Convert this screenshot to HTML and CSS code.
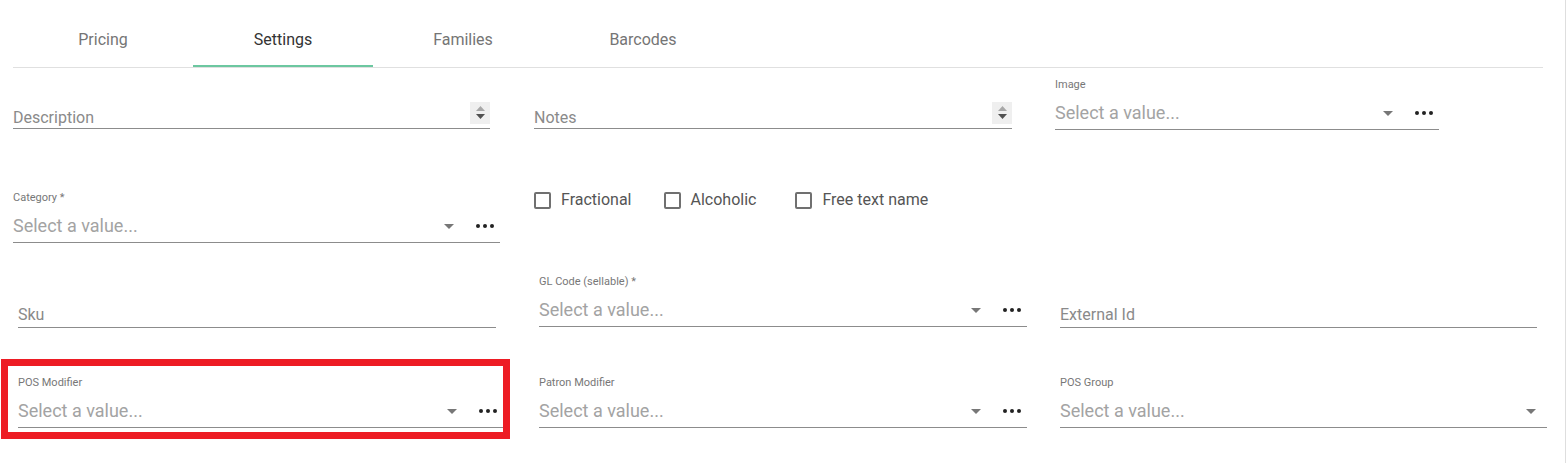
FILE: index.html
```html
<!DOCTYPE html>
<html>
<head>
<meta charset="utf-8">
<link rel="stylesheet" href="styles.css">
</head>
<body>
<div class="page">
  <div class="tabs">
    <div class="tab">Pricing</div>
    <div class="tab active">Settings</div>
    <div class="tab">Families</div>
    <div class="tab">Barcodes</div>
  </div>

  <div class="row row1">
    <div class="field tf w-desc ml-13 mb-1">
      <div class="tcontrol tall">
        <span class="ttext">Description</span>
        <span class="spinner"><svg width="20" height="22" viewBox="0 0 20 22"><polygon points="6,9 15,9 10.5,4" fill="#a8a8a8"/><polygon points="6,12 15,12 10.5,17" fill="#505050"/></svg></span>
      </div>
    </div>
    <div class="field tf w-notes ml-44 mb-1">
      <div class="tcontrol tall">
        <span class="ttext">Notes</span>
        <span class="spinner"><svg width="20" height="22" viewBox="0 0 20 22"><polygon points="6,9 15,9 10.5,4" fill="#a8a8a8"/><polygon points="6,12 15,12 10.5,17" fill="#505050"/></svg></span>
      </div>
    </div>
    <div class="field w-image ml-43">
      <div class="label">Image</div>
      <div class="scontrol">
        <span class="ph">Select a value...</span>
        <svg class="arrow" width="10" height="5" viewBox="0 0 10 5"><polygon points="0,0 10,0 5,5" fill="#777"/></svg>
        <svg class="dots" width="18" height="4" viewBox="0 0 18 4"><circle cx="2" cy="2" r="2" fill="#222"/><circle cx="9" cy="2" r="2" fill="#222"/><circle cx="16" cy="2" r="2" fill="#222"/></svg>
      </div>
    </div>
  </div>

  <div class="row row2">
    <div class="field w-cat ml-13">
      <div class="label">Category *</div>
      <div class="scontrol">
        <span class="ph">Select a value...</span>
        <svg class="arrow" width="10" height="5" viewBox="0 0 10 5"><polygon points="0,0 10,0 5,5" fill="#777"/></svg>
        <svg class="dots" width="18" height="4" viewBox="0 0 18 4"><circle cx="2" cy="2" r="2" fill="#222"/><circle cx="9" cy="2" r="2" fill="#222"/><circle cx="16" cy="2" r="2" fill="#222"/></svg>
      </div>
    </div>
    <div class="checks">
      <label class="check"><span class="box"></span><span class="ctext">Fractional</span></label>
      <label class="check"><span class="box"></span><span class="ctext">Alcoholic</span></label>
      <label class="check"><span class="box"></span><span class="ctext">Free text name</span></label>
    </div>
  </div>

  <div class="row row3">
    <div class="field tf w-sku ml-18">
      <div class="tcontrol"><span class="ttext">Sku</span></div>
    </div>
    <div class="field w-gl ml-43 mb-1">
      <div class="label">GL Code (sellable) *</div>
      <div class="scontrol">
        <span class="ph">Select a value...</span>
        <svg class="arrow" width="10" height="5" viewBox="0 0 10 5"><polygon points="0,0 10,0 5,5" fill="#777"/></svg>
        <svg class="dots" width="18" height="4" viewBox="0 0 18 4"><circle cx="2" cy="2" r="2" fill="#222"/><circle cx="9" cy="2" r="2" fill="#222"/><circle cx="16" cy="2" r="2" fill="#222"/></svg>
      </div>
    </div>
    <div class="field tf w-ext ml-33">
      <div class="tcontrol"><span class="ttext">External Id</span></div>
    </div>
  </div>

  <div class="row row4">
    <div class="field w-posmod ml-18">
      <div class="label">POS Modifier</div>
      <div class="scontrol">
        <span class="ph">Select a value...</span>
        <svg class="arrow" width="10" height="5" viewBox="0 0 10 5"><polygon points="0,0 10,0 5,5" fill="#777"/></svg>
        <svg class="dots" width="18" height="4" viewBox="0 0 18 4"><circle cx="2" cy="2" r="2" fill="#222"/><circle cx="9" cy="2" r="2" fill="#222"/><circle cx="16" cy="2" r="2" fill="#222"/></svg>
      </div>
    </div>
    <div class="field w-gl ml-36">
      <div class="label">Patron Modifier</div>
      <div class="scontrol">
        <span class="ph">Select a value...</span>
        <svg class="arrow" width="10" height="5" viewBox="0 0 10 5"><polygon points="0,0 10,0 5,5" fill="#777"/></svg>
        <svg class="dots" width="18" height="4" viewBox="0 0 18 4"><circle cx="2" cy="2" r="2" fill="#222"/><circle cx="9" cy="2" r="2" fill="#222"/><circle cx="16" cy="2" r="2" fill="#222"/></svg>
      </div>
    </div>
    <div class="field w-posgroup ml-33">
      <div class="label">POS Group</div>
      <div class="scontrol nodots">
        <span class="ph">Select a value...</span>
        <svg class="arrow" width="10" height="5" viewBox="0 0 10 5"><polygon points="0,0 10,0 5,5" fill="#777"/></svg>
      </div>
    </div>
  </div>

  <div class="highlight"></div>
</div>
</body>
</html>
```

FILE: styles.css
```css
* { box-sizing: border-box; }

html, body {
  margin: 0;
  padding: 0;
  background: #fff;
}

body {
  font-family: Roboto, "Liberation Sans", Arial, sans-serif;
}

.page {
  position: relative;
  width: 1566px;
  height: 463px;
  border-right: 1px solid #dedede;
  overflow: hidden;
}

/* Tabs */
.tabs {
  display: flex;
  margin-left: 13px;
  width: 1530px;
  height: 68px;
  border-bottom: 1px solid #e0e0e0;
}

.tab {
  width: 180px;
  height: 67px;
  padding-top: 30px;
  text-align: center;
  font-size: 16px;
  line-height: 20px;
  color: #757575;
}

.tab.active {
  color: #333;
  border-bottom: 2px solid #6cc7a0;
}

/* Rows */
.row {
  display: flex;
  align-items: flex-end;
}

.row1 { height: 62px; }
.row2 { height: 113px; }
.row3 { height: 85px; }
.row4 { height: 100px; }

.ml-13 { margin-left: 13px; }
.ml-18 { margin-left: 18px; }
.ml-33 { margin-left: 33px; }
.ml-36 { margin-left: 36px; }
.ml-43 { margin-left: 43px; }
.ml-44 { margin-left: 44px; }
.mb-1 { margin-bottom: 1px; }
.mb-2 { margin-bottom: 2px; }

.w-desc { width: 477px; }
.w-notes { width: 478px; }
.w-image { width: 384px; }
.w-cat { width: 487px; }
.w-sku { width: 478px; }
.w-gl { width: 488px; }
.w-ext { width: 477px; }
.w-posmod { width: 485px; }
.w-posgroup { width: 487px; }

/* Fields */
.label {
  font-size: 11px;
  line-height: 14px;
  height: 14px;
  color: #777;
  margin-bottom: 4px;
  white-space: nowrap;
}

.tcontrol {
  display: flex;
  align-items: flex-end;
  height: 27px;
  padding-bottom: 2px;
  border-bottom: 1px solid #8c8c8c;
}

.tcontrol.tall { padding-bottom: 0; }

.ttext {
  flex: 1;
  font-size: 16px;
  line-height: 20px;
  color: #8a8a8a;
}

.spinner {
  align-self: flex-start;
  display: block;
  width: 20px;
  height: 22px;
  background: #efefef;
}

.spinner svg { display: block; }

.scontrol {
  display: flex;
  align-items: center;
  height: 34px;
  padding-right: 6px;
  padding-top: 1px;
  border-bottom: 1px solid #8c8c8c;
}

.scontrol.nodots { padding-right: 11px; }

.ph {
  flex: 1;
  font-size: 18px;
  line-height: 22px;
  color: #a3a3a3;
  white-space: nowrap;
}

.arrow {
  display: block;
  margin-right: 22px;
  margin-top: 1px;
}

.nodots .arrow { margin-right: 0; }

.dots { display: block; }

/* Checkboxes */
.checks {
  align-self: flex-start;
  display: flex;
  margin-left: 34px;
  margin-top: 60px;
}

.check {
  display: flex;
  align-items: center;
  margin-right: 32px;
}

.check:nth-child(2) { margin-right: 39px; }

.box {
  display: block;
  width: 17px;
  height: 17px;
  border: 2px solid #707070;
  border-radius: 2px;
  margin-right: 10px;
}

.ctext {
  font-size: 16px;
  line-height: 20px;
  color: #555;
}

/* Red highlight annotation */
.highlight {
  position: absolute;
  left: 1px;
  top: 359px;
  width: 509px;
  height: 80px;
  border: 7px solid #ed1c24;
}
```
